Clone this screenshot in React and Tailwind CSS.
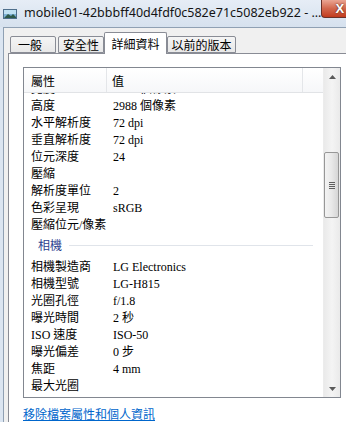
import React from 'react';

const imageRows = [
  ['寬度', '5312 個像素'],
  ['高度', '2988 個像素'],
  ['水平解析度', '72 dpi'],
  ['垂直解析度', '72 dpi'],
  ['位元深度', '24'],
  ['壓縮', ''],
  ['解析度單位', '2'],
  ['色彩呈現', 'sRGB'],
  ['壓縮位元/像素', ''],
];

const cameraRows = [
  ['相機製造商', 'LG Electronics'],
  ['相機型號', 'LG-H815'],
  ['光圈孔徑', 'f/1.8'],
  ['曝光時間', '2 秒'],
  ['ISO 速度', 'ISO-50'],
  ['曝光偏差', '0 步'],
  ['焦距', '4 mm'],
  ['最大光圈', ''],
];

const Row = ({ label, value }) => (
  <div className="flex h-[17px] items-center shrink-0">
    <div className="w-[84px] pl-[7px] whitespace-nowrap font-['Liberation_Serif','Noto_Sans_CJK_TC',serif]">{label}</div>
    <div className="pl-[5px] whitespace-nowrap font-['Liberation_Serif','Noto_Sans_CJK_TC',serif]">{value}</div>
  </div>
);

const Tab = ({ label, active, className }) => (
  <div
    className={`flex items-center shrink-0 border border-[#898c95] rounded-t-[2px] ${
      active
        ? 'h-[22px] mb-[-1px] border-b-0 bg-white relative z-10 justify-center'
        : 'h-[17px] bg-gradient-to-b from-[#f5f5f5] to-[#e8e8e8]'
    } ${className}`}
  >
    {label}
  </div>
);

export default function App() {
  const [first, ...restImage] = imageRows;
  return (
    <div className="w-[346px] h-[422px] overflow-hidden flex flex-col bg-[#dbe5f1] text-[12px] text-black font-['Noto_Sans_CJK_TC',sans-serif]">
      {/* title bar */}
      <div className="h-[27px] shrink-0 flex items-start bg-gradient-to-b from-[#e6edf6] to-[#d6e1ee]">
        <svg width="14" height="10" viewBox="0 0 14 10" className="ml-[3px] mt-[9px] shrink-0">
          <rect x="0.5" y="0.5" width="13" height="9" fill="#7fb3d8" stroke="#4f6f8c" />
          <rect x="1" y="1" width="12" height="4" fill="#bfe0f2" />
          <path d="M1 9 L5 5 L8 7 L10 5 L13 8 L13 9 Z" fill="#2f5a4a" />
        </svg>
        <div className="ml-[7px] mt-[5px] whitespace-nowrap text-[12.5px] leading-[16px] font-['Segoe_UI','Noto_Sans',sans-serif] text-[#141414]">
          mobile01-42bbbff40d4fdf0c582e71c5082eb922 - ...
        </div>
        <div className="ml-auto shrink-0 w-[27px] h-[18px] mr-[-2px] rounded-bl-[4px] border border-t-0 border-r-0 border-[#6a3128] bg-gradient-to-b from-[#eaa593] via-[#d2674d] to-[#c23a1c] flex items-center pl-[13px]">
          <span className="text-white text-[13px] font-bold leading-none font-['Liberation_Sans',sans-serif] [text-shadow:0_0_2px_#3a1a14]">X</span>
        </div>
      </div>

      {/* dialog body */}
      <div className="flex-1 flex pl-[3px] min-h-0">
        <div className="flex-1 flex flex-col border-l border-t border-[#8fa0b3] bg-[#f0f0f0] pl-[4px] min-h-0">
          {/* tabs */}
          <div className="h-[25px] shrink-0 flex items-end pl-[2px]">
            <Tab label="一般" className="w-[46px] pl-[7px]" />
            <Tab label="安全性" className="w-[46px] ml-[2px] justify-center" />
            <Tab label="詳細資料" active className="w-[63px]" />
            <Tab label="以前的版本" className="w-[69px] justify-center" />
          </div>

          {/* tab page */}
          <div className="flex-1 flex flex-col bg-white border-l border-t border-[#898c95] pl-[14px] pt-[13px] min-h-0">
            <div className="w-[318px] h-[331px] shrink-0 flex border border-[#828790]">
              <div className="flex-1 flex flex-col min-w-0">
                {/* header */}
                <div className="h-[25px] shrink-0 flex bg-gradient-to-b from-white to-[#f6f7f9] border-b border-[#e1e3e6]">
                  <div className="w-[83px] border-r border-[#e4e6e9] pl-[7px] pt-[4px]">屬性</div>
                  <div className="w-[196px] border-r border-[#e4e6e9] pl-[5px] pt-[4px]">值</div>
                  <div className="flex-1" />
                </div>
                {/* rows */}
                <div className="flex-1 flex flex-col overflow-hidden min-h-0">
                  {/* row scrolled mostly out of view */}
                  <div className="h-[4px] shrink-0 overflow-hidden">
                    <div className="mt-[-13px]">
                      <Row label={first[0]} value={first[1]} />
                    </div>
                  </div>
                  {restImage.map((r) => (
                    <Row key={r[0]} label={r[0]} value={r[1]} />
                  ))}
                  <div className="h-[25px] shrink-0 flex items-center pl-[14px] pr-[10px] gap-[7px]">
                    <span className="text-[#2d3f8f] mt-[-2px]">相機</span>
                    <div className="flex-1 h-px bg-[#e0e4ea] mt-[-1px]" />
                  </div>
                  {cameraRows.map((r) => (
                    <Row key={r[0]} label={r[0]} value={r[1]} />
                  ))}
                </div>
              </div>

              {/* scrollbar */}
              <div className="w-[17px] shrink-0 flex flex-col bg-gradient-to-r from-[#eaeaea] via-[#f4f4f4] to-[#eaeaea] border-l border-[#ececec]">
                <div className="h-[17px] shrink-0 flex items-center justify-center">
                  <svg width="7" height="4" viewBox="0 0 7 4">
                    <path d="M3.5 0 L7 4 L0 4 Z" fill="#5a5a5a" />
                  </svg>
                </div>
                <div className="mt-[67px] h-[66px] w-[15px] shrink-0 rounded-[2px] border border-[#979797] bg-gradient-to-r from-[#f3f3f3] via-[#e9e9e9] to-[#d6d6d6] flex flex-col items-center justify-center gap-[1px]">
                  <div className="w-[6px] h-px bg-[#5e5e5e]" />
                  <div className="w-[6px] h-px bg-[#5e5e5e]" />
                  <div className="w-[6px] h-px bg-[#5e5e5e]" />
                  <div className="w-[6px] h-px bg-[#5e5e5e]" />
                </div>
                <div className="flex-1" />
                <div className="h-[17px] shrink-0 flex items-center justify-center">
                  <svg width="7" height="4" viewBox="0 0 7 4">
                    <path d="M0 0 L7 0 L3.5 4 Z" fill="#5a5a5a" />
                  </svg>
                </div>
              </div>
            </div>

            <a className="mt-[9px] leading-[14px] text-[#0066cc] underline whitespace-nowrap w-fit">
              移除檔案屬性和個人資訊
            </a>
          </div>
        </div>
      </div>
    </div>
  );
}
